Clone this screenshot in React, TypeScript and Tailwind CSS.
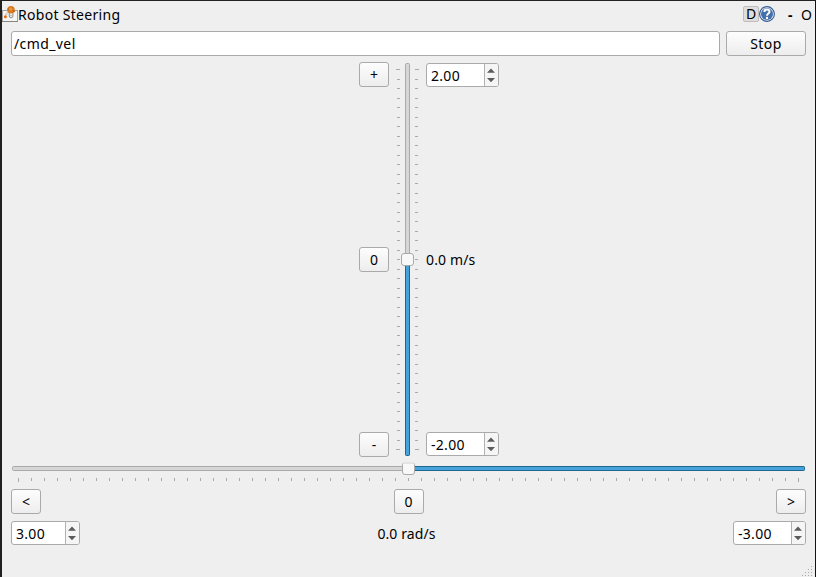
import type { ReactNode } from "react";

const verticalTicks = Array.from({ length: 41 }, (_, i) => 6 + Math.round(i * 9.5));
const horizontalTicks = Array.from({ length: 61 }, (_, i) => 7 + i * 13);
const gripDots = [[9, 1], [6, 4], [9, 4], [3, 7], [6, 7], [9, 7], [0, 10], [3, 10], [6, 10], [9, 10]];

function Button({ children, wide }: { children: ReactNode; wide?: boolean }) {
  return (
    <button
      className={`flex h-[25px] shrink-0 items-center justify-center rounded-[3px] border border-[#aaa] bg-linear-to-b from-[#fdfdfd] to-[#ededed] leading-none ${wide ? "w-20 tracking-[0.4px]" : "w-[30px]"}`}
    >
      {children}
    </button>
  );
}

function SpinBox({ value, narrow }: { value: string; narrow?: boolean }) {
  return (
    <div className={`flex h-6 shrink-0 overflow-hidden rounded-[3px] border border-[#aaa] bg-white ${narrow ? "w-[69px]" : "w-[73px]"}`}>
      <span className="flex-1 pl-1 leading-[24px] tracking-[0.3px]">{value}</span>
      <svg className="h-[22px] w-[14px] border-l border-[#b1b1b1] bg-[#f5f5f5]" viewBox="0 0 13 22">
        <path d="M2 8.7L6 4.5l4 4.2zM2 14h8l-4 4.2z" fill="#5c5c5c" />
      </svg>
    </div>
  );
}

function RobotIcon() {
  return (
    <svg width="16" height="17" viewBox="0 0 16 17" className="shrink-0">
      <rect x=".5" y="4.5" width="15" height="11" fill="#f5f5f3" stroke="#a3a3a1" />
      <path d="M0 15.5h16" stroke="#858583" />
      <path d="M7 4.5L3.5 9.5" stroke="#d9d2ca" strokeWidth="2" />
      <path d="M7.3 6v4a1.8 1.8 0 0 0 3.6 0V6" fill="#f8f8f8" stroke="#8b8b89" />
      <circle cx="9" cy="9.5" r=".9" fill="#bcbcba" />
      <circle cx="9" cy="3.8" r="3.7" fill="#d87a20" />
      <circle cx="6.3" cy="3.2" r="1" fill="#c66a16" />
      <circle cx="12" cy="5.2" r="1.1" fill="#c66a16" />
      <circle cx="8.6" cy="3" r="1.5" fill="#eb9a48" />
      <circle cx="3.4" cy="10.7" r="1.5" fill="#e06c13" />
    </svg>
  );
}

function HelpIcon() {
  return (
    <svg width="16" height="16" viewBox="0 0 16 16" className="shrink-0">
      <circle cx="8" cy="8" r="7.4" fill="#e8eef6" stroke="#32578e" strokeWidth="1.1" />
      <circle cx="8" cy="8" r="6" fill="#4370aa" />
      <path d="M5.4 6c.1-3.4 5.4-3.1 5.1-.2C10.3 7.6 8 7.5 8 9.7" fill="none" stroke="#fff" strokeWidth="2" />
      <circle cx="8" cy="12" r="1.2" fill="#fff" />
    </svg>
  );
}

function VerticalSlider() {
  return (
    <svg width="24" height="394" viewBox="0 0 24 394" className="shrink-0">
      <g fill="#aaa">
        {verticalTicks.map((y, i) => {
          const end = i === 0 || i === 40;
          return (
            <g key={y}>
              <rect x={end ? 0 : 1} y={y} width={end ? 4 : 3} height="1" />
              <rect x="19" y={y} width={end ? 4 : 3} height="1" />
            </g>
          );
        })}
      </g>
      <rect x="9.5" y=".5" width="4" height="392" rx="1" fill="#d6d6d6" stroke="#aaa" />
      <rect x="9.5" y="196.5" width="4" height="196" rx="1" fill="#46a2da" stroke="#20678f" />
      <rect x="5.5" y="190.5" width="12" height="12" rx="2.5" fill="#f8f8f8" stroke="#aaa" />
    </svg>
  );
}

function HorizontalSlider() {
  return (
    <svg width="795" height="22" viewBox="0 0 795 22" className="block">
      <rect x="1.5" y="5.5" width="792" height="4" rx="1" fill="#d6d6d6" stroke="#aaa" />
      <rect x="397.5" y="5.5" width="396" height="4" rx="1" fill="#46a2da" stroke="#20678f" />
      <path d="M392.5 2l-1 1.5V11q0 2.5 2.5 2.5h7q2.5 0 2.5-2.5V3.5l-1-1.5z" fill="#f8f8f8" stroke="#aaa" />
      <path d="M392 2h11" stroke="#f8f8f8" />
      <g fill="#aaa">
        {horizontalTicks.map((x, i) => <rect key={x} x={x} y="17" width="1" height={i === 0 || i === 60 ? 4 : 3} />)}
      </g>
    </svg>
  );
}

export default function App() {
  return (
    <main className="h-[577px] w-[816px] overflow-hidden border-t border-r border-l-2 border-t-[#242124] border-r-[#180f1c] border-l-[#20201d] bg-[#efefef] font-['Noto_Sans','Open_Sans',sans-serif] text-[14px] text-black">
      <header className="flex h-[30px] items-start pt-[5px] leading-[18px]">
        <RobotIcon />
        <h1 className="flex-1 tracking-[0.3px]">Robot Steering</h1>
        <button className="flex h-4 w-4 items-center justify-center rounded-[2px] border border-[#bdbdbd] bg-[#dedede] leading-none">D</button>
        <HelpIcon />
        <span className="ml-[13px] w-[13px] font-bold">-</span>
        <span className="w-[14px]">O</span>
      </header>
      <div className="flex gap-1.5 pr-[9px] pl-[9px]">
        <div className="h-[25px] flex-1 rounded-[3px] border border-[#aaa] bg-white pl-0.5 leading-[24px] tracking-[0.4px]">/cmd_vel</div>
        <Button wide>Stop</Button>
      </div>
      <section className="mt-1.5 flex h-[399px] pl-[357px]">
        <div className="flex h-[395px] flex-col justify-between">
          <Button>+</Button>
          <Button>0</Button>
          <Button>-</Button>
        </div>
        <div className="mt-px ml-[7px]"><VerticalSlider /></div>
        <div className="mt-px ml-1.5 flex h-[393px] flex-col justify-between">
          <SpinBox value="2.00" />
          <span className="leading-[24px] tracking-[0.15px]">0.0 m/s</span>
          <SpinBox value="-2.00" />
        </div>
      </section>
      <section className="pr-[9px] pl-[9px]">
        <HorizontalSlider />
        <div className="mt-1.5 flex justify-between">
          <Button>&lt;</Button>
          <Button>0</Button>
          <Button>&gt;</Button>
        </div>
        <div className="mt-[7px] grid grid-cols-[1fr_auto_1fr]">
          <SpinBox value="3.00" narrow />
          <span className="mr-1 leading-[25px] tracking-[0.1px]">0.0 rad/s</span>
          <div className="flex justify-end"><SpinBox value="-3.00" /></div>
        </div>
      </section>
      <footer className="mt-[19px] flex justify-end pr-0.5">
        <svg width="11" height="12" shapeRendering="crispEdges">
          {gripDots.map(([x, y]) => <rect key={`${x}-${y}`} x={x} y={y} width="1" height="1" fill="#aaa" />)}
        </svg>
      </footer>
    </main>
  );
}
